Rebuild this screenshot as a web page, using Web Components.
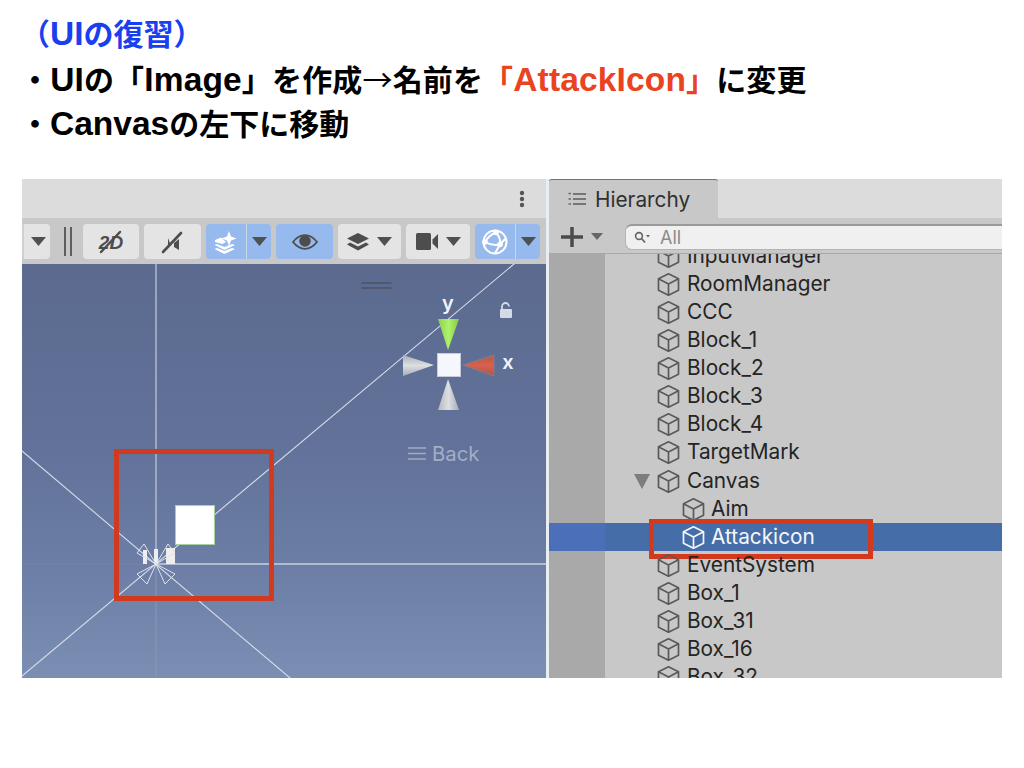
<!DOCTYPE html>
<html lang="ja"><head><meta charset="utf-8"><title>UIの復習</title>
<style>
html,body{margin:0;padding:0;background:#fff}
body{width:1024px;height:768px;overflow:hidden;font-family:"Liberation Sans","Noto Sans CJK JP",sans-serif}
</style></head><body>
<template id="t-head"><style>
:host{display:block;height:179px;box-sizing:border-box;padding:11px 0 0 20px;font:bold 30px/44.500px "Liberation Sans","Noto Sans CJK JP",sans-serif;color:#000;white-space:nowrap}
::slotted(.blue){color:#1a3ff0;margin:2px 0 -2px}
::slotted(.line){display:block}
</style><slot></slot></template>

<template id="t-lat"><style>
:host{display:inline;font-size:33.500px;line-height:1}
</style><slot></slot></template>

<template id="t-shot"><style>
:host{display:flex;margin-left:22px;width:980px;height:499px;background:#e9edf4}
</style><slot></slot></template>

<template id="t-btn"><style>
:host{display:flex;flex:none;height:35px;box-sizing:border-box;align-items:center;justify-content:center;background:#e4e4e4;border-radius:4px;color:#4d4d4d;gap:0}
:host([on]){background:#96b9ee}
svg{display:block}
</style><slot></slot></template>

<template id="t-scene"><style>
:host{display:flex;flex-direction:column;flex:none;width:524px;height:499px}
.title{height:39px;background:#dcdcdc;display:flex;justify-content:flex-end;align-items:center;padding-right:21px}
.bar{height:46px;box-sizing:border-box;background:#c8c8c8;display:flex;align-items:center;gap:5px;padding:1px 6px 0 0}
.view{position:relative;flex:1;background:linear-gradient(#5b6a8e 0%,#62729a 45%,#6d7fa6 75%,#7b8eb3 100%);overflow:hidden}
.view svg{position:absolute;left:0;top:0}
.frame{position:absolute;left:92px;top:185px;width:160px;height:152px;box-sizing:border-box;border:5px solid #d13a1e}
text{font-family:Inter,sans-serif}
</style>
<div class="title"><svg width="6" height="18" viewBox="0 0 6 18"><circle cx="3" cy="3" r="2.2" fill="#555"/><circle cx="3" cy="9" r="2.2" fill="#555"/><circle cx="3" cy="15" r="2.2" fill="#555"/></svg></div>
<div class="bar"><slot name="bar"></slot></div>
<div class="view">
<svg width="524" height="414" viewBox="22 264 524 414">
<g fill="none" stroke-linecap="round">
<path d="M22 676L514 264" stroke="#d5dbe8" stroke-width="1.1"/>
<path d="M22 451L290 678" stroke="#d5dbe8" stroke-width="1.1"/>
<path d="M156 264V564" stroke="#c4cbdc" stroke-width="1.2"/>
<path d="M156 564V678" stroke="#8a97b5" stroke-width="1"/>
<path d="M22 564H156" stroke="#7685a6" stroke-width="1"/>
<path d="M156 564H546" stroke="#c8d0e0" stroke-width="1.4"/>
<path d="M362 283H391M362 288H391" stroke="#4d5364" stroke-width="1.4"/>
</g>
<rect x="175.500" y="505.500" width="39" height="39" fill="#fff" stroke="#a6d2a0"/>
<g fill="#eeeeee"><rect x="143" y="550" width="4" height="14"/><rect x="154" y="549" width="4" height="15"/><rect x="166" y="548" width="9" height="16"/></g>
<g fill="none" stroke="#dfe3ec" stroke-width="1"><path d="M156 564L144 544L137 553Z"/><path d="M156 564L168 544L175 553Z"/><path d="M156 564L137 574L147 584Z"/><path d="M156 564L175 574L165 584Z"/></g>
<defs>
<linearGradient id="gl" x1="0" x2="1" y1="0" y2="0"><stop offset="0" stop-color="#b4b6bd"/><stop offset=".5" stop-color="#dddfe3"/><stop offset="1" stop-color="#a8acb6"/></linearGradient>
<linearGradient id="gg" x1="0" x2="1" y1="0" y2="0"><stop offset="0" stop-color="#8ed04e"/><stop offset=".5" stop-color="#aef26a"/><stop offset="1" stop-color="#86c84c"/></linearGradient>
<linearGradient id="gv" x1="0" x2="0" y1="0" y2="1"><stop offset="0" stop-color="#a8acb6"/><stop offset=".5" stop-color="#dddfe3"/><stop offset="1" stop-color="#a8acb6"/></linearGradient>
<linearGradient id="gr" x1="0" x2="0" y1="0" y2="1"><stop offset="0" stop-color="#bb5748"/><stop offset=".5" stop-color="#d8604e"/><stop offset="1" stop-color="#b55445"/></linearGradient>
</defs>
<path d="M438 319H459L448 350Z" fill="url(#gg)"/>
<path d="M403 355V376L434 365Z" fill="url(#gv)"/>
<path d="M494 355V376L463 365Z" fill="url(#gr)" stroke="#7d8396" stroke-width=".8"/>
<path d="M448 379L459 410H438Z" fill="url(#gl)"/>
<rect x="437.500" y="353.500" width="23" height="23" fill="#f5f7fd" stroke="#c6cbd8"/>
<text x="448" y="310" text-anchor="middle" font-size="20" font-weight="600" fill="#f1f3f8">y</text>
<text x="508" y="369" text-anchor="middle" font-size="20" font-weight="600" fill="#f1f3f8">x</text>
<rect x="500" y="309" width="12" height="9" rx="1" fill="#d6dae4"/>
<path d="M502 309V306.500a3.500 3.500 0 0 1 7 0" fill="none" stroke="#d6dae4" stroke-width="1.800"/>
<path d="M408 448H426M408 453.500H426M408 459H426" stroke="#a0abc2" stroke-width="1.7"/>
<text x="432" y="460.500" font-size="20.300" fill="#a3aec5">Back</text>
</svg>
<div class="frame"></div>
</div></template>

<template id="t-hier"><style>
:host{display:flex;flex-direction:column;flex:none;width:453px;height:499px;margin-left:3px;overflow:hidden;font-family:Inter,sans-serif}
.tabs{height:39px;background:#dcdcdc;display:flex;flex:none}
.tab{width:169px;box-sizing:border-box;background:#c8c8c8;border-top:1px solid #4a7ab8;border-radius:3px 3px 0 0;display:flex;align-items:center;gap:9px;padding:0 0 0 19px;font-size:20.800px;color:#303030}
.tools{height:36px;flex:none;box-sizing:border-box;background:#c8c8c8;display:flex;align-items:center;border-bottom:1px solid #a8a8a8;padding-top:2px}
.plus{display:flex;align-items:center;gap:8px;width:76px;padding-left:12px;box-sizing:border-box}
.search{flex:1;height:26px;box-sizing:border-box;background:#f0f0f0;border:1px solid #b4b4b4;border-top:2px solid #9a9a9a;border-right:0;border-radius:7px 0 0 7px;display:flex;align-items:center;gap:10px;padding-left:8px;font-size:18px;color:#8b8b8b}
.list{flex:1;overflow:hidden;background:linear-gradient(90deg,#a9a9a9 56px,#c8c8c8 56px)}
.inner{margin-top:-12px}
</style>
<div class="tabs"><div class="tab"><svg width="18" height="14" viewBox="0 0 18 14"><path d="M5 2H18M5 7H18M5 12H18" stroke="#5a5a5a" stroke-width="1.500"/><path d="M0.500 1.500H3M0.500 7H3M0.500 12H3" stroke="#6a6a6a" stroke-width="1.600"/></svg><span>Hierarchy</span></div></div>
<div class="tools"><div class="plus"><svg width="22" height="20" viewBox="0 0 22 20"><path d="M0 10H22M11 0V20" stroke="#4b4b4b" stroke-width="3.500"/></svg><svg width="12" height="7" viewBox="0 0 12 7"><path d="M0 0H12L6 7Z" fill="#666"/></svg></div>
<div class="search"><svg width="16" height="13" viewBox="0 0 16 13"><circle cx="5" cy="5" r="3.400" fill="none" stroke="#666" stroke-width="1.600"/><path d="M7.500 7.500L11 11.500" stroke="#666" stroke-width="1.800"/><path d="M12 4H16L14 6.500Z" fill="#666"/></svg><span>All</span></div></div>
<div class="list"><div class="inner"><slot></slot></div></div>
</template>

<template id="t-row"><style>
:host{display:flex;align-items:center;height:28.130px;box-sizing:border-box;padding-left:107px;gap:6px;font:20.800px/28px Inter,sans-serif;color:#242424;white-space:nowrap;position:relative}
:host([depth="1"]){padding-left:132px;gap:5px}
:host([selected]){background:linear-gradient(90deg,#4b70b9 56px,#456ea9 56px);color:#f4f6fa}
svg{flex:none;display:block;color:#5a5a5a}
:host([selected]) svg{color:#f4f6fa}
.t{margin-top:-1px}
</style><slot name="arrow"></slot>
<svg width="25" height="25" viewBox="0 0 25 25" fill="none" stroke="currentColor" stroke-width="1.700" stroke-linejoin="round"><path d="M12.500 1.800L22.500 6.800V18.200L12.500 23.200L2.500 18.200V6.800Z"/><path d="M2.500 6.800L12.500 12L22.500 6.800M12.500 12V23.200"/></svg>
<span class="t"><slot></slot></span></template>

<template id="t-mark"><style>
:host{display:block;position:absolute;left:100px;top:-4px;width:224px;height:40px;box-sizing:border-box;border:5px solid #d13a1e;pointer-events:none}
</style></template>

<demo-head>
<span class="line blue">（<latin-run>UI</latin-run>の復習）</span>
<span class="line" style="letter-spacing:.15px">・<latin-run>UI</latin-run>の「<latin-run>Image</latin-run>」を作成<span style="font-family:'Noto Sans CJK JP',sans-serif;font-weight:400">→</span>名前を<span style="color:#e9431f">「<latin-run>AttackIcon</latin-run>」</span>に変更</span>
<span class="line">・<latin-run>Canvas</latin-run>の左下に移動</span>
</demo-head>
<shot-row>
<scene-panel>
<tool-btn slot="bar" style="width:28px;justify-content:flex-end;padding-right:4px;border-radius:0 4px 4px 0;border-left:2px solid #d0d0d0"><svg width="15" height="9" viewBox="0 0 15 9"><path d="M0 0H15L7.500 9Z" fill="#505050"/></svg></tool-btn>
<div slot="bar" style="flex:none;box-sizing:border-box;width:8px;height:29px;border-left:2px solid #5e5e5e;border-right:2px solid #5e5e5e;margin:0 6px 0 9px"></div>
<tool-btn slot="bar" style="width:56px"><svg width="26" height="24" viewBox="0 0 26 24"><text x="13" y="19" text-anchor="middle" font-family="Liberation Sans" font-style="italic" font-weight="700" font-size="19" fill="#4d4d4d">2D</text><path d="M3 22L22 2" stroke="#4d4d4d" stroke-width="2.500" stroke-linecap="round"/></svg></tool-btn>
<tool-btn slot="bar" style="width:57px"><svg width="24" height="24" viewBox="0 0 24 24"><path d="M7 8L10 16H7ZM13 13L18 9V20L13 17Z" fill="#4d4d4d"/><path d="M2 22L20 3" stroke="#4d4d4d" stroke-width="2.600" stroke-linecap="round"/></svg></tool-btn>
<tool-btn slot="bar" on style="width:65px;justify-content:flex-start"><span style="width:40px;height:35px;display:flex;align-items:center;justify-content:center;border-right:1px solid #c9d6e4"><svg width="26" height="26" viewBox="0 0 26 26" fill="#fff"><path d="M16 2L18 7.500L23.500 9.500L18 11.500L16 17L14 11.500L8.500 9.500L14 7.500Z"/><path d="M2 11L8 8.500L13 13L9.500 15L2 13Z"/><path d="M1.500 16L4 15L11.500 18L19 15L22 16L11.500 21Z"/><path d="M1.500 20L4 19L11.500 22L19 19L22 20L11.500 25Z"/></svg></span><span style="flex:1;display:flex;justify-content:center"><svg width="15" height="9" viewBox="0 0 15 9"><path d="M0 0H15L7.500 9Z" fill="#505050"/></svg></span></tool-btn>
<tool-btn slot="bar" on style="width:57px"><svg width="26" height="16" viewBox="0 0 26 16"><path d="M1 8C5 3 9 1.200 13 1.200S21 3 25 8C21 13 17 14.800 13 14.800S5 13 1 8Z" fill="none" stroke="#4d4d4d" stroke-width="1.800"/><circle cx="13" cy="7" r="5.800" fill="#4d4d4d"/></svg></tool-btn>
<tool-btn slot="bar" style="width:63px;gap:8px"><svg width="22" height="18" viewBox="0 0 22 18" fill="#4d4d4d"><path d="M11 0L22 5.500L11 11L0 5.500Z"/><path d="M3 9.500L11 13.500L19 9.500L22 11.500L11 17.500L0 11.500Z"/></svg><svg width="15" height="9" viewBox="0 0 15 9"><path d="M0 0H15L7.500 9Z" fill="#505050"/></svg></tool-btn>
<tool-btn slot="bar" style="width:64px;gap:8px"><svg width="22" height="17" viewBox="0 0 22 17" fill="#4d4d4d"><rect width="15" height="17" rx="1.500"/><path d="M16.500 6.500L22 1V16L16.500 10.500Z"/></svg><svg width="15" height="9" viewBox="0 0 15 9"><path d="M0 0H15L7.500 9Z" fill="#505050"/></svg></tool-btn>
<tool-btn slot="bar" on style="width:65px;justify-content:flex-start"><span style="width:40px;height:35px;display:flex;align-items:center;justify-content:center;border-right:1px solid #c9d6e4"><svg width="26" height="26" viewBox="0 0 26 26" fill="none" stroke="#fff" stroke-width="2"><circle cx="13" cy="13" r="11.500"/><path d="M14 3.500Q7 6 3 13M14 3.500Q19 9 18 15.500M3 13Q10 17 18 15.500M18 15.500Q15 21 13 24M18 15.500L24 9"/><g fill="#fff" stroke="none"><circle cx="14" cy="3.500" r="2.800"/><circle cx="3" cy="13" r="2.800"/><circle cx="18" cy="15.500" r="2.800"/></g></svg></span><span style="flex:1;display:flex;justify-content:center"><svg width="15" height="9" viewBox="0 0 15 9"><path d="M0 0H15L7.500 9Z" fill="#505050"/></svg></span></tool-btn>
</scene-panel>
<hier-panel>
<tree-row>InputManager</tree-row>
<tree-row>RoomManager</tree-row>
<tree-row>CCC</tree-row>
<tree-row>Block_1</tree-row>
<tree-row>Block_2</tree-row>
<tree-row>Block_3</tree-row>
<tree-row>Block_4</tree-row>
<tree-row>TargetMark</tree-row>
<tree-row><svg slot="arrow" style="position:absolute;left:85px;top:7px" width="16" height="15" viewBox="0 0 16 15"><path d="M0 0H16L8 15Z" fill="#7d7d7d"/></svg>Canvas</tree-row>
<tree-row depth="1">Aim</tree-row>
<tree-row depth="1" selected>Attackicon<mark-box slot="arrow"></mark-box></tree-row>
<tree-row>EventSystem</tree-row>
<tree-row>Box_1</tree-row>
<tree-row>Box_31</tree-row>
<tree-row>Box_16</tree-row>
<tree-row>Box_32</tree-row>
</hier-panel>
</shot-row>
<script>
function reg(tag,id){customElements.define(tag,class extends HTMLElement{constructor(){super();this.attachShadow({mode:"open"}).appendChild(document.getElementById(id).content.cloneNode(true));}});}
reg("demo-head","t-head");reg("latin-run","t-lat");reg("shot-row","t-shot");reg("tool-btn","t-btn");reg("scene-panel","t-scene");reg("hier-panel","t-hier");reg("tree-row","t-row");reg("mark-box","t-mark");
</script>
</body></html>
